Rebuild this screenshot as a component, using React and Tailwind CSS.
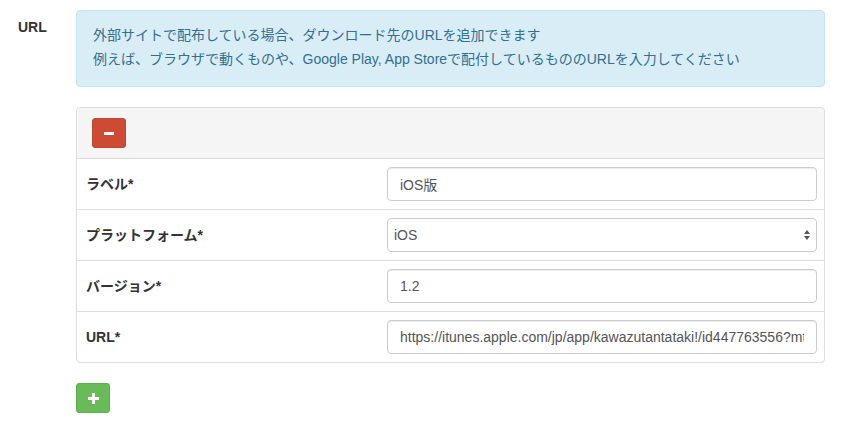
import React from "react";

const font = { fontFamily: '"Liberation Sans", "Noto Sans CJK JP", sans-serif' };

function TextRow({ label, value }) {
  return (
    <div className="grid grid-cols-[302px_1fr] border-t border-[#dddddd]">
      <div className="flex items-center pl-[9px] text-[14px] font-bold text-[#333333]">{label}</div>
      <div className="py-2 pl-2 pr-[7px]">
        <input
          readOnly
          value={value}
          className="block h-[34px] w-full rounded-[4px] border border-[#cccccc] bg-white px-3 text-[14px] text-[#555555] outline-none shadow-[inset_0_1px_1px_rgba(0,0,0,0.075)]"
          style={font}
        />
      </div>
    </div>
  );
}

function SelectRow({ label, value }) {
  return (
    <div className="grid grid-cols-[302px_1fr] border-t border-[#dddddd]">
      <div className="flex items-center pl-[9px] text-[14px] font-bold text-[#333333]">{label}</div>
      <div className="py-2 pl-2 pr-[7px]">
        <div className="flex h-[34px] w-full items-center justify-between rounded-[4px] border border-[#cccccc] bg-white pl-[6px] pr-[5px] text-[14px] text-[#555555]">
          <span>{value}</span>
          <svg width="8" height="12" viewBox="0 0 8 12">
            <path d="M4 1 L7 5 L1 5 Z" fill="#555" />
            <path d="M4 11 L7 7 L1 7 Z" fill="#555" />
          </svg>
        </div>
      </div>
    </div>
  );
}

export default function App() {
  return (
    <div className="min-h-[425px] w-[854px] bg-white text-[#333333]" style={font}>
      <div className="flex pt-[10px]">
        <div className="w-[76px] shrink-0 pl-[18px] pt-[7px] text-[14px] font-bold leading-[20px]">URL</div>
        <div className="w-[749px] shrink-0">
          <div className="rounded-[4px] border border-[#bce8f1] bg-[#d9edf7] pl-4 pt-[12px] pb-[15px] text-[14px] leading-[24px] text-[#31708f]">
            <p>外部サイトで配布している場合、ダウンロード先のURLを追加できます</p>
            <p>例えば、ブラウザで動くものや、Google Play, App Storeで配付しているもののURLを入力してください</p>
          </div>

          <div className="mt-5 overflow-hidden rounded-[4px] border border-[#dddddd] bg-white">
            <div className="bg-[#f5f5f5] px-[15px] py-[10px]">
              <button className="flex h-[30px] w-[34px] items-center justify-center rounded-[3px] border border-[#c64530] bg-[#cd4b35]">
                <span className="block h-[3px] w-[10px] bg-white" />
              </button>
            </div>
            <TextRow label="ラベル*" value="iOS版" />
            <SelectRow label="プラットフォーム*" value="iOS" />
            <TextRow label="バージョン*" value="1.2" />
            <TextRow label="URL*" value="https://itunes.apple.com/jp/app/kawazutantataki!/id447763556?mt=8" />
          </div>

          <button className="mt-5 flex h-[30px] w-[34px] items-center justify-center rounded-[3px] border border-[#5cb04c] bg-[#68bb58]">
            <svg width="11" height="11" viewBox="0 0 11 11">
              <rect x="4" y="0" width="3" height="11" fill="#fff" />
              <rect x="0" y="4" width="11" height="3" fill="#fff" />
            </svg>
          </button>
        </div>
      </div>
    </div>
  );
}
